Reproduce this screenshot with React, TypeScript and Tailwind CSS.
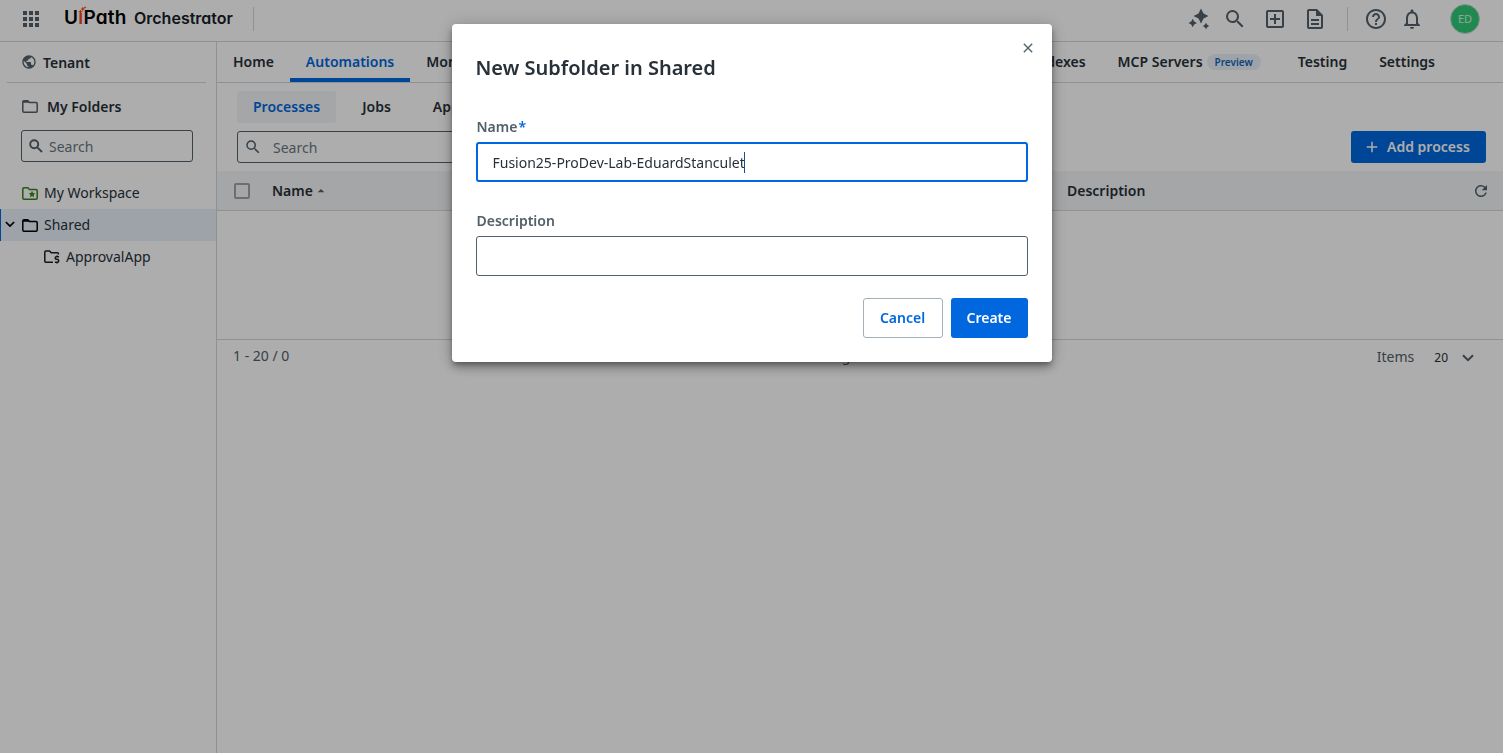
import React from "react";
import {
  MdApps,
  MdSearch,
  MdOutlineAddBox,
  MdOutlineDescription,
  MdHelpOutline,
  MdNotificationsNone,
  MdPublic,
  MdArrowDropUp,
  MdRefresh,
  MdClose,
  MdAdd,
} from "react-icons/md";

function Sparkles() {
  return (
    <svg width="22" height="22" viewBox="0 0 22 22" fill="currentColor">
      <path d="M13 .6 L15.500 5.500 L20.500 8 L15.500 10.500 L13 15.400 L10.500 10.500 L5.500 8 L10.500 5.500 Z" />
      <path d="M4.700 10.800 L6.200 13.500 L8.900 15 L6.200 16.500 L4.700 19.200 L3.200 16.500 L.5 15 L3.200 13.500 Z" />
      <path d="M18 14.800 L19.200 16.800 L21.200 18 L19.200 19.200 L18 21.200 L16.800 19.200 L14.800 18 L16.800 16.800 Z" />
    </svg>
  );
}

function BoldSearch({ className = "" }: { className?: string }) {
  return (
    <svg className={className} width="14" height="14" viewBox="0 0 14 14" fill="none" stroke="currentColor" strokeWidth="1.9">
      <circle cx="5.200" cy="5.200" r="4" />
      <path d="M8.300 8.300 L13 13" />
    </svg>
  );
}

function Folder({ className = "", star = false }: { className?: string; star?: boolean }) {
  return (
    <svg className={className} width="16" height="13" viewBox="0 0 16 13" fill="none" stroke="currentColor" strokeWidth="1.5">
      <path d="M2 .8 H5.800 L7.400 2.500 H14 Q15.200 2.500 15.200 3.700 V11 Q15.200 12.200 14 12.200 H2 Q.8 12.200 .8 11 V2 Q.8 .8 2 .8 Z" />
      {star ? (
        <path
          d="M10 3.800 L11 6 L13.300 6.200 L11.600 7.800 L12.100 10.200 L10 9 L7.900 10.200 L8.400 7.800 L6.700 6.200 L9 6 Z"
          fill="currentColor"
          stroke="none"
        />
      ) : (
        <path d="M1 1 H5.700 L7.400 2.700 H1 Z" fill="currentColor" stroke="none" />
      )}
    </svg>
  );
}

function SolutionFolder() {
  return (
    <svg className="text-[#182027]" width="16" height="14" viewBox="0 0 16 14" fill="none" stroke="currentColor" strokeWidth="1.500">
      <path d="M9 12.300 H1.800 Q.8 12.300 .8 11.300 V2 Q.8 1 1.800 1 H5.600 L7.200 2.700 H13.400 Q14.400 2.700 14.400 3.700 V4.600" />
      <path d="M15 6.700 H12.300 Q11.200 6.700 11.200 7.900 Q11.200 9.100 12.400 9.200 H13.400 Q14.700 9.400 14.700 10.700 Q14.700 12.200 13.400 12.200 H10.900 M13 5.500 V6.700 M13 12.200 V13.500" />
    </svg>
  );
}

function Chevron({ className = "" }: { className?: string }) {
  return (
    <svg className={className} viewBox="0 0 12 8" fill="none" stroke="currentColor" strokeWidth="2">
      <path d="M1 1.200 L6 6.200 L11 1.200" />
    </svg>
  );
}

function Header() {
  return (
    <header className="flex h-[42px] shrink-0 items-center border-b border-[#cfd8dd] pb-1 text-[#526069]">
      <MdApps className="ml-[19px] size-6" />
      <div className="relative ml-[21px] flex h-[26px] w-[63px] items-center pb-px font-['Inter'] text-[19px] font-semibold tracking-[0.2px] text-black [font-feature-settings:'cv11']">
        <span>U</span>
        <span className="text-[#fa4616]">ı</span>
        <span>Path</span>
        <svg className="absolute left-[13px] top-0" width="10" height="9" viewBox="0 0 12 12" fill="#fa4616">
          <path d="M4 4.500 L5 6.500 L7 7.500 L5 8.500 L4 10.500 L3 8.500 L1 7.500 L3 6.500 Z M7 1 L8 3 L10 4 L8 5 L7 7 L6 5 L4.500 4 L6 3 Z M10 0 L10.500 1.300 L12 2 L10.500 2.700 L10 4 L9.500 2.700 L8 2 L9.500 1.300 Z" />
        </svg>
      </div>
      <div className="ml-[7px] w-[99px] whitespace-nowrap pb-0.5 font-['Inter'] text-[16px] font-[560] text-[#182027] [font-feature-settings:'cv11']">
        Orchestrator
      </div>
      <div className="ml-5 h-6 w-px bg-[#cfd8dd]" />
      <div className="ml-auto flex items-center">
        <Sparkles />
        <MdSearch className="ml-[13px] size-6" />
        <MdOutlineAddBox className="ml-4 size-6" />
        <MdOutlineDescription className="ml-4 size-6" />
        <div className="ml-5 h-6 w-px bg-[#cfd8dd]" />
        <MdHelpOutline className="ml-4 size-6" />
        <MdNotificationsNone className="ml-3 size-6" />
        <div className="ml-[26px] mr-[23px] flex size-[30px] items-center justify-center rounded-full border border-[#cfd8dd] bg-[#2fcb75] text-[11px] text-white/80">
          ED
        </div>
      </div>
    </header>
  );
}

function Sidebar() {
  return (
    <aside className="flex w-[217px] shrink-0 flex-col border-r border-[#cfd8dd]">
      <div className="mx-[7px] mr-[10px] flex h-[41px] items-center border-b border-[#cfd8dd] pl-[14px] font-semibold">
        <MdPublic className="size-4 text-[#526069]" />
        <span className="ml-[6px] pt-px">Tenant</span>
      </div>
      <div className="flex h-[47px] items-center pl-[22px] font-semibold">
        <Folder className="text-[#526069]" />
        <span className="ml-[9px]">My Folders</span>
      </div>
      <div className="ml-[21px] flex h-8 w-[172px] items-center rounded-[3px] border border-[#526069] pl-[7px] text-[#6b7882]">
        <BoldSearch className="text-[#526069]" />
        <span className="ml-[6px] pt-px">Search</span>
      </div>
      <div className="mt-[15px] flex h-8 items-center pl-[22px]">
        <Folder star className="text-[#38821c]" />
        <span className="ml-[6px]">My Workspace</span>
      </div>
      <div className="flex h-8 items-center border-l border-[#0067df] bg-[#e9f1fa] pl-1">
        <Chevron className="mb-0.5 w-[10px] text-black" />
        <Folder className="ml-[7px] text-black" />
        <span className="ml-[6px]">Shared</span>
      </div>
      <div className="flex h-8 items-center pl-11">
        <SolutionFolder />
        <span className="ml-[6px]">ApprovalApp</span>
      </div>
    </aside>
  );
}

function Tab({ label, active = false, badge }: { label: string; active?: boolean; badge?: string }) {
  return (
    <div
      className={
        active
          ? "flex h-full items-center border-b-4 border-[#0067df] px-4 pt-1 text-[#0067df]"
          : "flex h-full items-center px-4"
      }
    >
      {label}
      {badge && (
        <span className="ml-1 mr-[5px] flex h-4 items-center rounded-full bg-[#e9f1fa] px-2 text-[10px] text-[#1665b3]">{badge}</span>
      )}
    </div>
  );
}

function Main() {
  return (
    <main className="flex min-w-0 flex-1 flex-col">
      <nav className="flex h-[41px] shrink-0 items-stretch border-b border-[#cfd8dd] font-semibold">
        <Tab label="Home" />
        <Tab label="Automations" active />
        <Tab label="Monitoring" />
        <div className="ml-auto mr-[52px] flex">
          <Tab label="Indexes" />
          <Tab label="MCP Servers" badge="Preview" />
          <Tab label="Testing" />
          <Tab label="Settings" />
        </div>
      </nav>
      <div className="mt-2 flex h-8 shrink-0 items-center gap-[10px] pl-5 font-semibold">
        <div className="flex h-8 items-center rounded-[3px] bg-[#f4f5f7] px-4 text-[#0067df]">Processes</div>
        <div className="px-4">Jobs</div>
        <div className="px-4">Apps</div>
      </div>
      <div className="mt-2 flex h-8 shrink-0 items-center justify-between pl-5 pr-[17px]">
        <div className="flex h-8 w-[300px] items-center rounded-[3px] border border-[#526069] pl-[6px] text-[#6b7882]">
          <MdSearch className="size-[18px] text-[#526069]" />
          <span className="ml-[11px] pt-px">Search</span>
        </div>
        <div className="flex h-8 w-[135px] items-center rounded-[3px] bg-[#0067df] pl-3 font-semibold text-white">
          <MdAdd className="size-[18px]" />
          <span className="ml-[6px] whitespace-nowrap">Add process</span>
        </div>
      </div>
      <div className="mt-2 flex h-10 shrink-0 items-center border-b border-[#cfd8dd] bg-[#f4f5f7] pl-[17px] font-semibold">
        <div className="size-4 rounded-[2px] border-2 border-[#a0a4a8]" />
        <div className="ml-[22px] flex w-[795px] items-center">
          Name
          <MdArrowDropUp className="size-4 text-[#526069]" />
        </div>
        <div>Description</div>
        <MdRefresh className="ml-auto mr-[13px] size-[18px] text-[#526069]" />
      </div>
      <div className="h-[129px] shrink-0 border-b border-[#cfd8dd]" />
      <div className="flex h-8 shrink-0 items-center justify-between pl-4 pr-[29px] text-[#526069]">
        <span>1 - 20 / 0</span>
        <span className="ml-[50px]">Page 1 / 0</span>
        <div className="flex items-center pt-0.5">
          <span>Items</span>
          <span className="ml-5 pt-px text-xs text-[#273139]">20</span>
          <Chevron className="ml-[14px] mt-px w-3" />
        </div>
      </div>
    </main>
  );
}

function Dialog() {
  return (
    <div className="fixed inset-0 flex items-start justify-center bg-black/32 pt-6">
      <section className="relative flex h-[338px] w-[600px] flex-col rounded-[4px] bg-white px-6 shadow-[0_3px_5px_-1px_rgba(0,0,0,0.3),0_6px_10px_0_rgba(0,0,0,0.24),0_1px_18px_0_rgba(0,0,0,0.2)]">
        <MdClose className="absolute right-4 top-4 size-4 text-[#526069]" />
        <h1 className="mt-[30px] h-7 text-xl leading-7 font-semibold">New Subfolder in Shared</h1>
        <label className="mt-[35px] h-5 pl-px font-semibold text-[#526069]">
          Name<span className="ml-px text-[#0067df]">*</span>
        </label>
        <div className="mt-[5px] flex h-10 shrink-0 items-center rounded-[3px] border-2 border-[#0067df] pl-[15px]">
          <span className="-mr-px pt-px">Fusion25-ProDev-Lab-EduardStanculet</span>
          <span className="h-[21px] w-px bg-[#174f96]" />
        </div>
        <label className="mt-[29px] h-5 pl-px font-semibold text-[#526069]">Description</label>
        <div className="mt-[5px] h-10 shrink-0 rounded-[3px] border border-[#526069]" />
        <div className="mt-[22px] flex justify-end gap-2 font-semibold">
          <button className="h-10 w-20 rounded-[3px] border border-[#a4b1b8] text-[#0067df]">Cancel</button>
          <button className="h-10 w-[77px] rounded-[3px] bg-[#0067df] text-white">Create</button>
        </div>
      </section>
    </div>
  );
}

export default function App() {
  return (
    <div className="flex h-[753px] w-[1503px] flex-col overflow-hidden bg-white font-['Noto_Sans',sans-serif] text-sm leading-5 text-[#273139]">
      <Header />
      <div className="flex min-h-0 flex-1">
        <Sidebar />
        <Main />
      </div>
      <Dialog />
    </div>
  );
}
